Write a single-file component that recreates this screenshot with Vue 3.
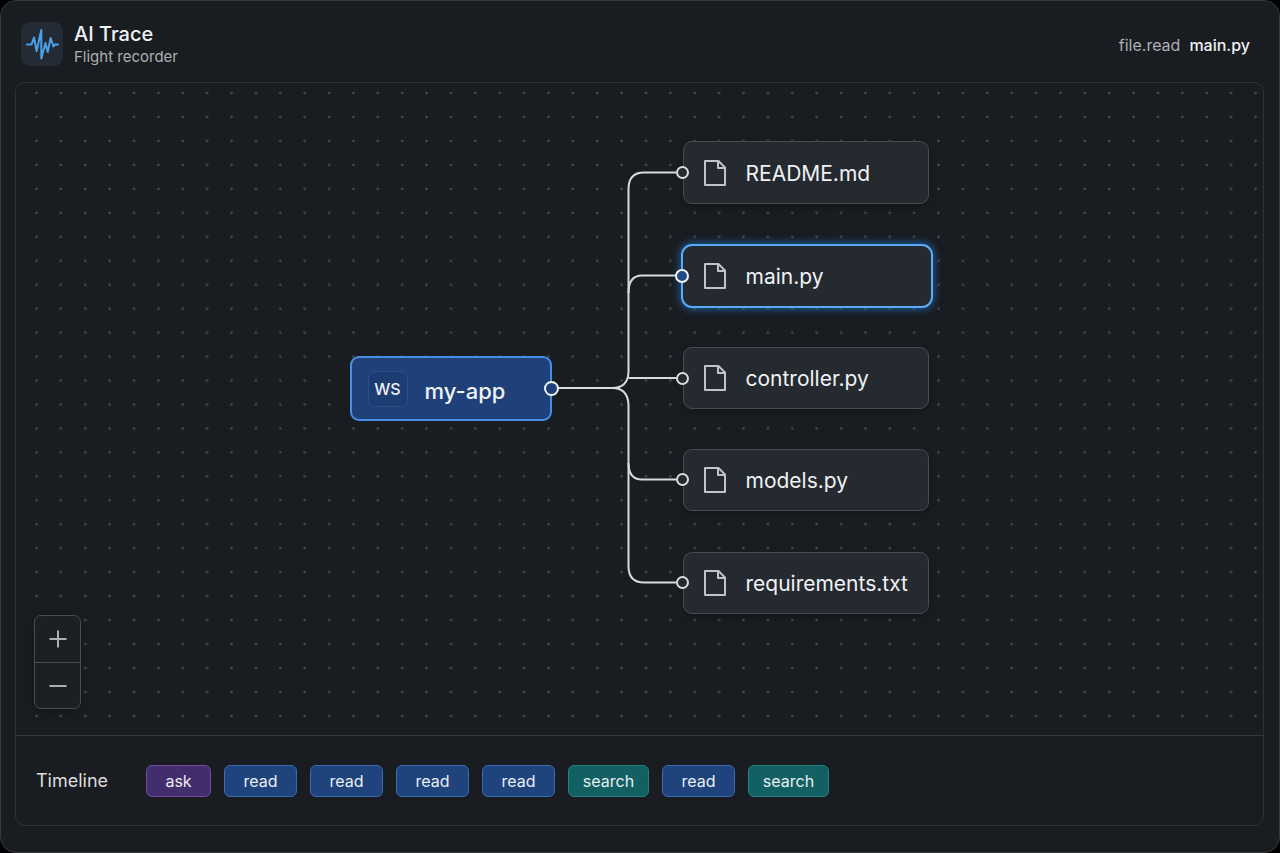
<script setup>
const files = [
  { name: 'README.md', top: 0, height: 63, port: 31 },
  { name: 'main.py', top: 103, height: 64, port: 134, active: true },
  { name: 'controller.py', top: 206, height: 62, port: 237 },
  { name: 'models.py', top: 308, height: 62, port: 338 },
  { name: 'requirements.txt', top: 411, height: 62, port: 441 },
]

const events = ['ask', 'read', 'read', 'read', 'read', 'search', 'read', 'search']
</script>

<template>
  <main class="window">
    <header class="top">
      <div class="logo">
        <svg width="42" height="44" viewBox="0 0 42 44" aria-hidden="true">
          <path d="M6 22.500H10.500L13 15.500L15.600 29L20.300 8V36.500L24.500 21L26.700 30L29.600 16L32.500 24.500L34 22.500H37" />
        </svg>
      </div>
      <div class="brand">
        <h1>AI Trace</h1>
        <p>Flight recorder</p>
      </div>
      <p class="status"><span>file.read</span><strong>main.py</strong></p>
    </header>

    <section class="panel">
      <div class="canvas">
        <svg class="dots" aria-hidden="true">
          <defs>
            <pattern id="dot-grid" x="8.3" y="-2" width="24.38" height="23.96" patternUnits="userSpaceOnUse">
              <circle cx="12.2" cy="12" r="1.3" fill="#484b50" />
            </pattern>
          </defs>
          <rect x="9" width="100%" height="100%" fill="url(#dot-grid)" />
        </svg>

        <div class="stage">
          <svg class="edges" viewBox="0 0 584 473" width="584" height="473" aria-hidden="true">
            <path d="M210 247H264Q280 247 280.500 231V48Q280.500 31.500 296 31.500H328" />
            <path d="M280.500 152Q280.500 134.500 294 134.500H328" />
            <path d="M280.500 237H328" />
            <path d="M264 247Q280 247 280.500 264V425Q280.500 441.500 296 441.500H328" />
            <path d="M280.500 322Q280.500 338.500 294 338.500H328" />
          </svg>

          <div class="node root">
            <span class="badge">WS</span>
            <span class="root-name">my-app</span>
          </div>
          <i class="port root-port"></i>

          <template v-for="file in files" :key="file.name">
            <div
              class="node file"
              :class="{ active: file.active }"
              :style="{ top: file.top + 'px', height: file.height + 'px' }"
            >
              <svg width="24" height="28" viewBox="0 0 24 28" aria-hidden="true">
                <path d="M2 2H15.500L22 8.500V26H2Z" />
                <path d="M15 2V9H22" />
              </svg>
              <span class="file-name">{{ file.name }}</span>
            </div>
            <i class="port" :class="{ lit: file.active }" :style="{ top: file.port + 'px' }"></i>
          </template>
        </div>

        <div class="zoom">
          <button type="button" aria-label="Zoom in">
            <svg width="18" height="18" viewBox="0 0 18 18"><path d="M0.500 9H17.500M9 0.500V17.500" /></svg>
          </button>
          <button type="button" aria-label="Zoom out">
            <svg width="18" height="18" viewBox="0 0 18 18"><path d="M0.500 9H17.500" /></svg>
          </button>
        </div>
      </div>

      <footer class="timeline">
        <h2>Timeline</h2>
        <div class="events">
          <button v-for="(event, i) in events" :key="i" type="button" :class="event">{{ event }}</button>
        </div>
      </footer>
    </section>
  </main>
</template>

<style>
body {
  margin: 0;
  background: #000;
}
</style>

<style scoped>
* {
  box-sizing: border-box;
}

.window {
  display: flex;
  flex-direction: column;
  min-height: 100vh;
  padding: 0 15px 26px 14px;
  border: 1px solid #36393d;
  border-radius: 16px;
  background: #191c20;
  color: #f0f1f3;
  font-family: Inter, "Liberation Sans", sans-serif;
}

h1,
h2,
p {
  margin: 0;
}

.top {
  display: flex;
  align-items: center;
  height: 81px;
  padding: 5px 14px 0 6px;
}

.logo {
  width: 42px;
  height: 44px;
  border-radius: 9px;
  background: #242b34;
}

.logo path {
  fill: none;
  stroke: #4ba0e8;
  stroke-width: 2;
  stroke-linecap: round;
  stroke-linejoin: round;
}

.brand {
  margin-left: 11px;
  padding-top: 2px;
}

.brand h1 {
  font-size: 20px;
  font-weight: 500;
  line-height: 24px;
}

.brand p {
  color: #adafb3;
  font-size: 15px;
  line-height: 22px;
}

.status {
  display: flex;
  gap: 9px;
  margin-left: auto;
  padding-top: 1px;
  color: #adafb3;
  font-size: 16px;
  line-height: 20px;
}

.status strong {
  color: #f0f1f3;
  font-weight: 500;
}

.panel {
  display: flex;
  flex: 1;
  flex-direction: column;
  border: 1px solid #2e3135;
  border-radius: 10px;
}

.canvas {
  position: relative;
  flex: 1;
  padding: 58px 0;
  overflow: hidden;
}

.dots {
  position: absolute;
  inset: 0;
  width: 100%;
  height: 100%;
}

.stage {
  position: relative;
  width: 584px;
  height: 473px;
  margin: 0 auto;
}

.edges {
  position: absolute;
  inset: 0;
}

.edges path {
  fill: none;
  stroke: #d9dadc;
  stroke-width: 2;
}

.node {
  position: absolute;
  display: flex;
  align-items: center;
  font-size: 21px;
  line-height: 28px;
}

.root {
  top: 215px;
  left: 2px;
  width: 202px;
  height: 65px;
  gap: 17px;
  padding-left: 16px;
  border: 2px solid #468fe5;
  border-radius: 9px;
  background: #1f4079;
}

.root-name {
  padding-top: 4px;
  font-size: 22px;
  font-weight: 500;
}

.badge {
  width: 40px;
  height: 36px;
  border: 1px solid #2a4f8b;
  border-radius: 6px;
  background: #1d3c72;
  font-size: 16px;
  font-weight: 500;
  line-height: 34px;
  text-align: center;
}

.file {
  left: 335px;
  width: 246px;
  gap: 19px;
  padding-left: 19px;
  border: 1px solid #484b50;
  border-radius: 9px;
  background: #252930;
  box-shadow: 0 3px 8px rgb(0 0 0 / 20%);
}

.file-name {
  padding-top: 2px;
}

.file svg path {
  fill: none;
  stroke: #c3c2c8;
  stroke-width: 2;
  stroke-linejoin: round;
}

.file.active {
  left: 333px;
  width: 252px;
  padding-left: 20px;
  border: 2px solid #58a9f7;
  border-radius: 11px;
  box-shadow: 0 0 9px 1px rgb(34 119 214 / 70%);
}

.port {
  position: absolute;
  left: 334px;
  width: 13px;
  height: 13px;
  margin: -6px 0 0 -6px;
  border: 2px solid #dcdddf;
  border-radius: 50%;
  background: #252930;
}

.port.lit {
  width: 14px;
  height: 14px;
  margin-left: -7px;
  border-color: #f0f3f7;
  background: #1f4a86;
}

.root-port {
  top: 246px;
  left: 202px;
  width: 15px;
  height: 15px;
  border-color: #f0f3f7;
  background: #1f4079;
}

.zoom {
  position: absolute;
  bottom: 26px;
  left: 18px;
  width: 47px;
  border: 1px solid #484b4f;
  border-radius: 7px;
  background: #1c1f23;
  box-shadow: 0 2px 8px rgb(0 0 0 / 20%);
}

.zoom button {
  display: flex;
  align-items: center;
  justify-content: center;
  width: 100%;
  height: 46px;
  padding: 0;
  border: 0;
  background: none;
}

.zoom button + button {
  border-top: 1px solid #484b4f;
}

.zoom path {
  stroke: #adaeb1;
  stroke-width: 2;
}

.timeline {
  display: flex;
  align-items: center;
  min-height: 90px;
  padding: 0 20px;
  border-top: 1px solid #34373b;
}

.timeline h2 {
  width: 110px;
  color: #dcdddf;
  font-size: 18px;
  font-weight: 400;
  line-height: 24px;
}

.events {
  display: flex;
  flex-wrap: wrap;
  gap: 13px;
}

.events button {
  height: 32px;
  width: 73px;
  padding: 0;
  border: 1px solid;
  border-radius: 6px;
  color: #e9eef5;
  font: 400 16px/20px Inter, "Liberation Sans", sans-serif;
}

.events .ask {
  width: 65px;
  border-color: #6a4b9e;
  background: #432d6c;
}

.events .read {
  border-color: #3a6bb0;
  background: #1f437c;
}

.events .search {
  width: 81px;
  border-color: #23827f;
  background: #136062;
}
</style>
